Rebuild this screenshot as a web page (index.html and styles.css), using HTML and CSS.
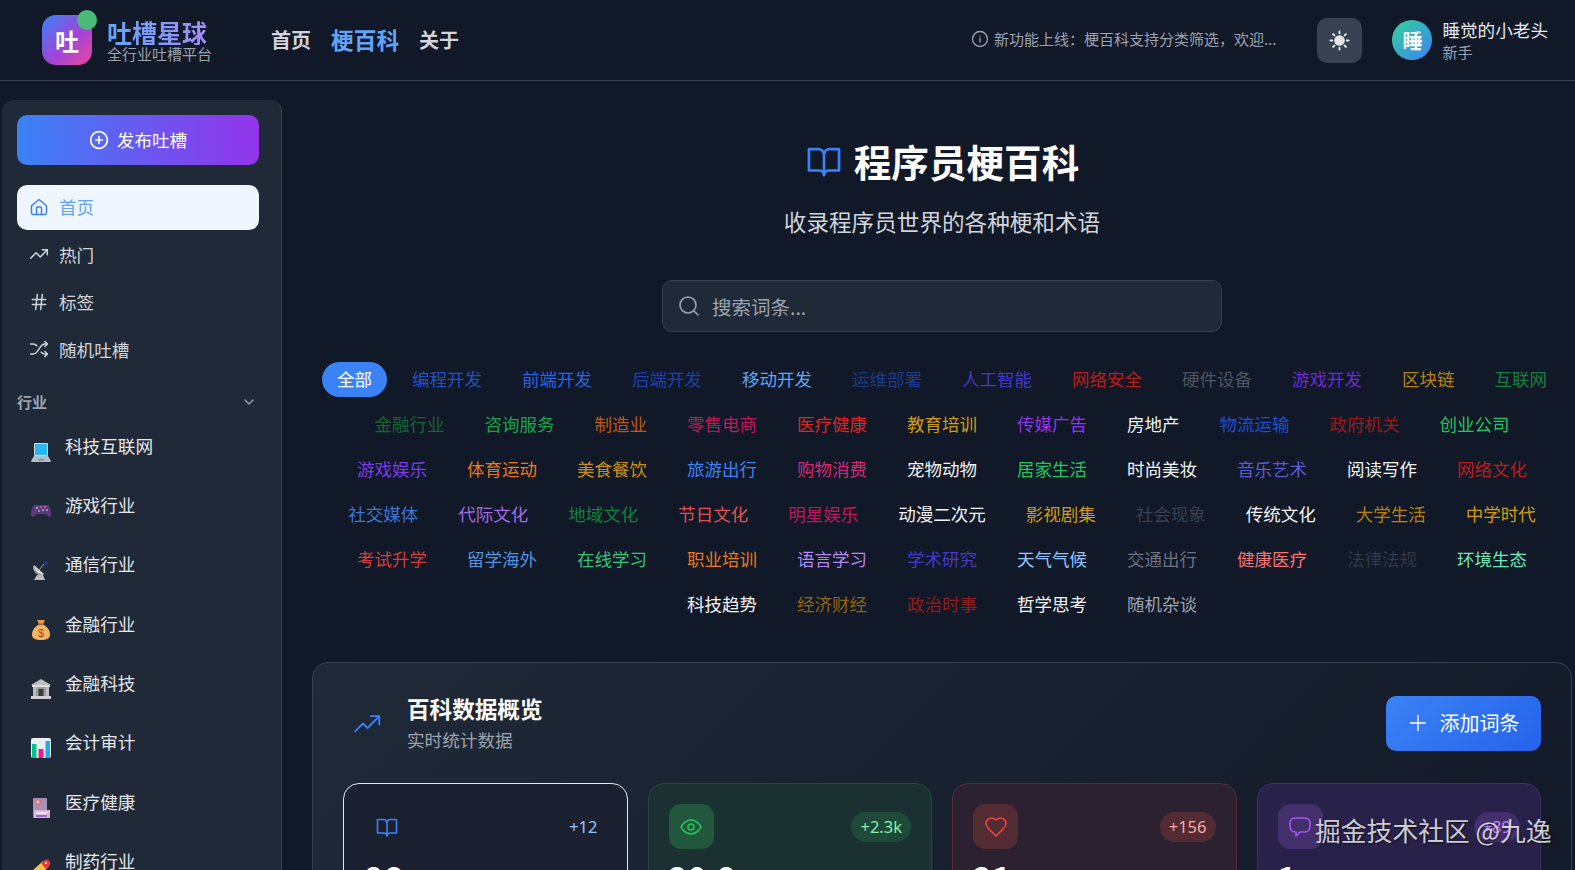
FILE: index.html
```html
<!DOCTYPE html>
<html lang="zh-CN">
<head>
<meta charset="utf-8">
<title>程序员梗百科</title>
<link rel="stylesheet" href="styles.css">
</head>
<body>
<header class="topbar">
  <div class="brand">
    <div class="logo">吐<span class="logo-dot"></span></div>
    <div class="brand-text">
      <div class="brand-name">吐槽星球</div>
      <div class="brand-sub">全行业吐槽平台</div>
    </div>
  </div>
  <nav class="topnav">
    <a class="topnav-link">首页</a>
    <a class="topnav-link is-active">梗百科</a>
    <a class="topnav-link">关于</a>
  </nav>
  <div class="notice">
    <svg class="notice-icon" viewBox="0 0 24 24"><circle cx="12" cy="12" r="10"/><path d="M12 16v-5M12 8h.01"/></svg>
    <span>新功能上线：梗百科支持分类筛选，欢迎...</span>
  </div>
  <button class="theme-btn" type="button">
    <svg viewBox="0 0 24 24"><circle cx="12" cy="12" r="4.5" class="sun-core"/><path d="M12 2.500v2M12 19.500v2M2.500 12h2M19.500 12h2M5.300 5.300l1.400 1.400M17.300 17.300l1.400 1.400M5.300 18.700l1.400-1.400M17.300 6.700l1.400-1.400"/></svg>
  </button>
  <div class="user">
    <div class="avatar">睡</div>
    <div class="user-text">
      <div class="user-name">睡觉的小老头</div>
      <div class="user-level">新手</div>
    </div>
  </div>
</header>

<div class="shell">
  <aside class="sidebar">
    <button class="publish" type="button">
      <svg viewBox="0 0 24 24"><circle cx="12" cy="12" r="10"/><path d="M12 8v8M8 12h8"/></svg>
      发布吐槽
    </button>
    <ul class="menu">
      <li class="menu-item is-current">
        <svg viewBox="0 0 24 24"><path d="M3 10.500 12 3l9 7.500V19a2 2 0 0 1-2 2H5a2 2 0 0 1-2-2z"/><path d="M9 21v-8a1 1 0 0 1 1-1h4a1 1 0 0 1 1 1v8"/></svg>
        首页
      </li>
      <li class="menu-item">
        <svg viewBox="0 0 24 24"><path d="M2 17l6.500-6.500 5 5L22 7"/><path d="M16 7h6v6"/></svg>
        热门
      </li>
      <li class="menu-item">
        <svg viewBox="0 0 24 24"><path d="M4 9h16M4 15h16M10 3 8 21M16 3l-2 18"/></svg>
        标签
      </li>
      <li class="menu-item">
        <svg viewBox="0 0 24 24"><path d="M2 18h3c2 0 3.500-1 4.600-2.600l4.800-6.800C15.500 7 17 6 19 6h3"/><path d="M19 3l3 3-3 3M19 15l3 3-3 3"/><path d="M2 6h3c1.800 0 3.200.8 4.300 2.200M14.700 15.800C15.800 17.200 17.200 18 19 18h3"/></svg>
        随机吐槽
      </li>
    </ul>
    <div class="section-head">
      <span>行业</span>
      <svg viewBox="0 0 24 24"><path d="m6 9 6 6 6-6"/></svg>
    </div>
    <ul class="industries">
      <li class="industry">
        <svg class="emoji" viewBox="0 0 20 20"><rect x="3" y="1" width="14" height="13" rx="1" fill="#cfd8dc"/><rect x="4" y="2" width="12" height="11" fill="#29b6f6"/><path d="M3 14h14l3 5a1 1 0 0 1-1 1H1a1 1 0 0 1-1-1z" fill="#b0bec5"/><rect x="7" y="17" width="6" height="1.500" fill="#78909c"/></svg>
        <span>科技互联网</span>
      </li>
      <li class="industry">
        <svg class="emoji" viewBox="0 0 20 20"><path d="M4 4h12c2 0 3 2 4 8 .4 3-.6 4-1.600 4-1.400 0-3-3-4.400-3H6c-1.400 0-3 3-4.400 3C.6 16-.4 15 0 12 1 6 2 4 4 4z" fill="#5c3a7d"/><circle cx="6" cy="7" r="1" fill="#c9b5e0"/><circle cx="10" cy="6" r=".8" fill="#c9b5e0"/><circle cx="14" cy="6" r="1" fill="#e57373"/><circle cx="12" cy="9" r="1" fill="#ba9fd8"/><circle cx="16" cy="9" r="1" fill="#ba9fd8"/><circle cx="8" cy="10" r=".9" fill="#ba9fd8"/></svg>
        <span>游戏行业</span>
      </li>
      <li class="industry">
        <svg class="emoji" viewBox="0 0 20 20"><path d="M3 5c1 5 4 8 10 9l-1.500 1.500c-5 .5-10-4-9.500-9z" fill="#9e9e9e"/><path d="M3 5l10 9c-4 1.500-10-3-10-9z" fill="#cfd8dc"/><path d="M8 10l5-6" stroke="#9e9e9e" stroke-width="1"/><path d="M13 4c0-2 2-3 3-4l1 6z" fill="#283593"/><path d="M6 15h6l2 5H3z" fill="#bdbdbd"/></svg>
        <span>通信行业</span>
      </li>
      <li class="industry">
        <svg class="emoji" viewBox="0 0 20 20"><path d="M7 5c-5 3-6 7-6 10 0 3 3 5 9 5s9-2 9-5c0-3-1-7-6-10z" fill="#f4b266"/><path d="M6 0h8l-2 4H8z" fill="#e89a46"/><rect x="7" y="3.500" width="6" height="1.600" fill="#8d6e3f"/><text x="10" y="16.500" class="emoji-dollar">$</text></svg>
        <span>金融行业</span>
      </li>
      <li class="industry">
        <svg class="emoji" viewBox="0 0 20 20"><path d="M10 0 20 6H0z" fill="#bdbdbd"/><rect x="1" y="6" width="18" height="2" fill="#e0e0e0"/><rect x="2" y="8" width="3" height="9" fill="#bdbdbd"/><rect x="15" y="8" width="3" height="9" fill="#bdbdbd"/><rect x="5" y="8" width="10" height="9" fill="#9e9e9e"/><rect x="7.500" y="10" width="5" height="7" fill="#37393d"/><rect x="0" y="17" width="20" height="3" fill="#cfd2d6"/></svg>
        <span>金融科技</span>
      </li>
      <li class="industry">
        <svg class="emoji" viewBox="0 0 20 20"><rect width="20" height="20" rx="2" fill="#eceff1"/><rect x="1" y="6" width="4.500" height="14" fill="#00c48c"/><rect x="7.500" y="11" width="5" height="9" fill="#e91e8c"/><rect x="14.500" y="3" width="4.500" height="17" fill="#29a9e6"/></svg>
        <span>会计审计</span>
      </li>
      <li class="industry">
        <svg class="emoji" viewBox="0 0 20 20"><rect x="2" y="0" width="14" height="20" rx="1" fill="#a892b6"/><circle cx="7" cy="4" r="3" fill="#e57373"/><path d="M6 4h2M7 3v2" stroke="#fff" stroke-width=".8"/><rect x="3" y="12" width="16" height="8" fill="#d9b8e0"/><rect x="5" y="14" width="11" height="2" fill="#f3e5f5"/><rect x="5" y="17" width="11" height="2" fill="#a366c0"/></svg>
        <span>医疗健康</span>
      </li>
      <li class="industry">
        <svg class="emoji" viewBox="0 0 20 20"><path d="M1 14 12 4l6 5L8 20H3z" fill="#f9c53b"/><path d="M10 6l4-3c2-1 4 0 5 2s0 3-1 4l-3 3z" fill="#e53935"/><circle cx="15" cy="6" r="1" fill="#fff"/></svg>
        <span>制药行业</span>
      </li>
    </ul>
  </aside>

  <main class="content">
    <section class="hero">
      <h1 class="hero-title">
        <svg viewBox="0 0 24 24"><path d="M12 6.500v14.500"/><path d="M2.500 4.500h6a3.500 3.500 0 0 1 3.500 3 3.500 3.500 0 0 1 3.500-3h6V18h-6.500c-1.400 0-2.500.9-3 2.500-.5-1.600-1.600-2.500-3-2.500H2.500z"/></svg>
        程序员梗百科
      </h1>
      <p class="hero-sub">收录程序员世界的各种梗和术语</p>
      <label class="search">
        <svg viewBox="0 0 24 24"><circle cx="11" cy="11" r="8"/><path d="m21 21-4.300-4.300"/></svg>
        <span>搜索词条...</span>
      </label>
    </section>

    <div class="tags">
      <span class="tag tag-all">全部</span>
      <span class="tag c-blue7">编程开发</span>
      <span class="tag c-blue6">前端开发</span>
      <span class="tag c-blue8">后端开发</span>
      <span class="tag c-blue4">移动开发</span>
      <span class="tag c-blue9">运维部署</span>
      <span class="tag c-indigo7">人工智能</span>
      <span class="tag c-red7">网络安全</span>
      <span class="tag c-gray6">硬件设备</span>
      <span class="tag c-purple7">游戏开发</span>
      <span class="tag c-yellow7">区块链</span>
      <span class="tag c-green7">互联网</span>
      <span class="tag c-green8">金融行业</span>
      <span class="tag c-green6">咨询服务</span>
      <span class="tag c-orange7">制造业</span>
      <span class="tag c-pink7">零售电商</span>
      <span class="tag c-red6">医疗健康</span>
      <span class="tag c-yellow6">教育培训</span>
      <span class="tag c-purple5">传媒广告</span>
      <span class="tag c-white">房地产</span>
      <span class="tag c-blue7b">物流运输</span>
      <span class="tag c-red8">政府机关</span>
      <span class="tag c-green5">创业公司</span>
      <span class="tag c-purple6">游戏娱乐</span>
      <span class="tag c-orange6">体育运动</span>
      <span class="tag c-yellow7b">美食餐饮</span>
      <span class="tag c-blue5">旅游出行</span>
      <span class="tag c-pink6">购物消费</span>
      <span class="tag c-white">宠物动物</span>
      <span class="tag c-green5">居家生活</span>
      <span class="tag c-white">时尚美妆</span>
      <span class="tag c-indigo5">音乐艺术</span>
      <span class="tag c-white">阅读写作</span>
      <span class="tag c-red7">网络文化</span>
      <span class="tag c-blue5b">社交媒体</span>
      <span class="tag c-purple4">代际文化</span>
      <span class="tag c-green7">地域文化</span>
      <span class="tag c-red5b">节日文化</span>
      <span class="tag c-pink7">明星娱乐</span>
      <span class="tag c-white">动漫二次元</span>
      <span class="tag c-yellow6">影视剧集</span>
      <span class="tag c-gray7">社会现象</span>
      <span class="tag c-white">传统文化</span>
      <span class="tag c-yellow7">大学生活</span>
      <span class="tag c-yellow6">中学时代</span>
      <span class="tag c-red5">考试升学</span>
      <span class="tag c-blue4b">留学海外</span>
      <span class="tag c-green4">在线学习</span>
      <span class="tag c-orange6">职业培训</span>
      <span class="tag c-purple4b">语言学习</span>
      <span class="tag c-indigo7">学术研究</span>
      <span class="tag c-blue3">天气气候</span>
      <span class="tag c-gray5">交通出行</span>
      <span class="tag c-red4">健康医疗</span>
      <span class="tag c-gray8">法律法规</span>
      <span class="tag c-green3">环境生态</span>
      <span class="tag c-white">科技趋势</span>
      <span class="tag c-yellow8">经济财经</span>
      <span class="tag c-red8b">政治时事</span>
      <span class="tag c-white">哲学思考</span>
      <span class="tag c-gray4">随机杂谈</span>
    </div>

    <section class="panel">
      <div class="panel-head">
        <svg class="panel-trend" viewBox="0 0 24 24"><path d="M1 19l7-7 4 4L22 6"/><path d="M15 5.500h7.500V13"/></svg>
        <div class="panel-titles">
          <h2 class="panel-title">百科数据概览</h2>
          <p class="panel-sub">实时统计数据</p>
        </div>
        <button class="add-btn" type="button">
          <svg viewBox="0 0 24 24"><path d="M12 3v18M3 12h18"/></svg>
          添加词条
        </button>
      </div>
      <div class="stats">
        <article class="stat stat-blue">
          <div class="stat-top">
            <span class="stat-icon"><svg viewBox="0 0 24 24"><path d="M12 6.500v14.500"/><path d="M2.500 4.500h6a3.500 3.500 0 0 1 3.500 3 3.500 3.500 0 0 1 3.500-3h6V18h-6.500c-1.400 0-2.500.9-3 2.500-.5-1.600-1.600-2.500-3-2.500H2.500z"/></svg></span>
            <span class="stat-badge">+12</span>
          </div>
          <div class="stat-num">86</div>
        </article>
        <article class="stat stat-green">
          <div class="stat-top">
            <span class="stat-icon"><svg viewBox="0 0 24 24"><path d="M2 12s3.500-7 10-7 10 7 10 7-3.500 7-10 7-10-7-10-7z"/><circle cx="12" cy="12" r="3"/></svg></span>
            <span class="stat-badge">+2.3k</span>
          </div>
          <div class="stat-num">20.8</div>
        </article>
        <article class="stat stat-red">
          <div class="stat-top">
            <span class="stat-icon"><svg viewBox="0 0 24 24"><path d="M19 14c1.500-1.500 3-3.200 3-5.500A5.500 5.500 0 0 0 16.500 3c-1.800 0-3 .5-4.500 2-1.500-1.500-2.700-2-4.500-2A5.500 5.500 0 0 0 2 8.500c0 2.300 1.500 4 3 5.500l7 7z"/></svg></span>
            <span class="stat-badge">+156</span>
          </div>
          <div class="stat-num">21</div>
        </article>
        <article class="stat stat-purple">
          <div class="stat-top">
            <span class="stat-icon"><svg viewBox="0 0 24 24"><path d="M7 3h10a5 5 0 0 1 5 5v4a5 5 0 0 1-5 5h-5l-4 4v-4H7a5 5 0 0 1-5-5V8a5 5 0 0 1 5-5z"/></svg></span>
            <span class="stat-badge">+89</span>
          </div>
          <div class="stat-num">1</div>
        </article>
      </div>
    </section>
  </main>
</div>
<div class="watermark">掘金技术社区 @九逸</div>
</body>
</html>
```
FILE: styles.css
```css
* { box-sizing: border-box; }
html, body { margin: 0; height: 100%; }
body {
  height: 870px;
  overflow: hidden;
  background: #111827;
  color: #fff;
  font-family: "Noto Sans CJK SC", "Noto Sans", sans-serif;
  position: relative;
}
svg { fill: none; stroke: currentColor; stroke-width: 2; stroke-linecap: round; stroke-linejoin: round; display: block; flex: none; }

.topbar {
  height: 81px;
  border-bottom: 1px solid #374151;
  padding: 0 27px 0 42px;
  display: flex;
  align-items: center;
}
.brand { display: flex; align-items: center; gap: 15px; }
.logo {
  width: 50px; height: 50px; border-radius: 14px;
  background: linear-gradient(135deg, #3b82f6, #a044d8 55%, #ec4899);
  display: flex; align-items: center; justify-content: center;
  font-size: 24px; font-weight: 700; position: relative;
}
.logo-dot {
  position: absolute; top: -5px; right: -5px;
  width: 20px; height: 20px; border-radius: 50%;
  background: #48bb78;
}
.brand-name {
  font-size: 25px; font-weight: 700; line-height: 26px;
  background: linear-gradient(90deg, #60a5fa, #a78bfa);
  -webkit-background-clip: text; background-clip: text; color: transparent;
}
.brand-sub { margin-top: 1px; font-size: 15px; line-height: 15px; color: #9ca3af; }

.topnav { display: flex; align-items: center; gap: 20px; margin-left: 59px; padding-bottom: 2px; }
.topnav-link { font-size: 20px; font-weight: 700; color: #d1d5db; }
.topnav-link.is-active { font-size: 22.700px; color: #60a5fa; }

.notice { margin-left: auto; display: flex; align-items: center; gap: 5px; padding-bottom: 3px; font-size: 15px; color: #9ca3af; }
.notice-icon { width: 18px; height: 18px; stroke-width: 1.800; }
.theme-btn {
  margin-left: 41px; width: 45px; height: 45px; border: 0; border-radius: 10px;
  background: #374151; color: #e5e7eb; padding: 11px; display: flex;
}
.theme-btn svg { width: 23px; height: 23px; }
.sun-core { fill: currentColor; }
.user { margin-left: 30px; display: flex; align-items: center; gap: 10px; }
.avatar {
  width: 40px; height: 40px; border-radius: 50%;
  background: linear-gradient(135deg, #34d399, #3b82f6);
  display: flex; align-items: center; justify-content: center;
  font-size: 20px; font-weight: 700;
}
.user-name { font-size: 17.600px; line-height: 24px; color: #e5e7eb; }
.user-level { font-size: 15px; line-height: 20px; color: #9ca3af; }

.shell { display: flex; padding: 19px 3px 0 2px; gap: 30px; align-items: flex-start; }

.sidebar {
  width: 280px; flex: none;
  height: 800px;
  overflow: hidden;
  background: #1f2937;
  border-radius: 12px 12px 0 0;
  border-right: 1px solid #374151;
  padding: 15px 22px 0 15px;
}
.publish {
  width: 100%; height: 50px; border: 0; border-radius: 10px; padding: 0 0 2px;
  background: linear-gradient(90deg, #3b82f6, #9333ea);
  color: #fff; font: inherit; font-size: 17.600px;
  display: flex; align-items: center; justify-content: center; gap: 8px;
}
.publish svg { width: 20px; height: 20px; margin-top: 2px; }
.menu, .industries { list-style: none; margin: 0; padding: 0; }
.menu { margin-top: 20px; display: flex; flex-direction: column; gap: 2.500px; }
.menu-item {
  height: 45px; border-radius: 10px; padding: 0 12px 2px;
  display: flex; align-items: center; gap: 10px;
  font-size: 17.600px; color: #d1d5db;
}
.menu-item svg { width: 20px; height: 20px; color: #d1d5db; stroke-width: 1.800; }
.menu-item.is-current { background: #eff6ff; color: #60a5fa; }
.menu-item.is-current svg { color: #3b82f6; }

.section-head {
  margin-top: 17px; height: 24px; display: flex; align-items: center; justify-content: space-between;
  padding-right: 2px; font-size: 15px; font-weight: 600; color: #9ca3af;
}
.section-head svg { width: 16px; height: 16px; }
.industries { margin-top: 19px; }
.industry {
  height: 59.400px; padding-left: 14px; display: flex; align-items: flex-start; gap: 14px;
  font-size: 17.600px; line-height: 26px; color: #e5e7eb;
}
.emoji { width: 20px; height: 20px; margin-top: 9px; stroke: none; }
.emoji-dollar { font-size: 11px; fill: #8d5a1f; text-anchor: middle; font-family: "Liberation Sans", sans-serif; }

.content { flex: 1; min-width: 0; padding-top: 38px; }
.hero { display: flex; flex-direction: column; align-items: center; }
.hero-title {
  margin: 0; font-size: 37.600px; font-weight: 700; line-height: 46px;
  display: flex; align-items: center; gap: 11px;
}
.hero-title svg { width: 38px; height: 38px; color: #3b82f6; stroke-width: 1.700; }
.hero-sub { margin: 22px 0 0; font-size: 22.600px; line-height: 32px; color: #d1d5db; }
.search {
  margin-top: 42px; width: 560px; height: 52px;
  background: #1f2937; border: 1px solid #374151; border-radius: 10px;
  display: flex; align-items: center; gap: 11px; padding-left: 14px;
  font-size: 19.500px; color: #9ca3af;
}
.search svg { width: 24px; height: 24px; stroke-width: 1.600; }

.tags {
  margin-top: 30px;
  display: flex; flex-wrap: wrap; justify-content: center; gap: 10px;
}
.tag { padding: 0 15px 2px; height: 35px; line-height: 33px; font-size: 17.500px; white-space: nowrap; border-radius: 18px; }
.tag-all { background: #3b82f6; color: #fff; }
.c-white { color: #f3f4f6; }
.c-blue3 { color: #93c5fd; } .c-blue4 { color: #60a5fa; } .c-blue4b { color: #4f94e0; } .c-blue5 { color: #3b82f6; } .c-blue5b { color: #3e75d4; }
.c-blue6 { color: #2563eb; } .c-blue7 { color: #2050c8; } .c-blue7b { color: #1d4ed8; } .c-blue8 { color: #1e40af; } .c-blue9 { color: #1e3a8a; }
.c-indigo5 { color: #5b5bd6; } .c-indigo7 { color: #4338ca; }
.c-red4 { color: #f87171; } .c-red5 { color: #d63c3c; } .c-red5b { color: #e05252; } .c-red6 { color: #dc2626; } .c-red7 { color: #b91c1c; } .c-red8 { color: #991b1b; } .c-red8b { color: #8f1d1d; }
.c-gray4 { color: #9ca3af; } .c-gray5 { color: #6b7280; } .c-gray6 { color: #4b5563; } .c-gray7 { color: #374151; } .c-gray8 { color: #2f3947; }
.c-purple4 { color: #a06be8; } .c-purple4b { color: #b685f5; } .c-purple5 { color: #9333ea; } .c-purple6 { color: #7c3aed; } .c-purple7 { color: #6d28d9; }
.c-yellow6 { color: #d19c12; } .c-yellow7 { color: #b58210; } .c-yellow7b { color: #c89212; } .c-yellow8 { color: #92640e; }
.c-green3 { color: #6ee7b7; } .c-green4 { color: #34c574; } .c-green5 { color: #22c55e; } .c-green6 { color: #16a34a; } .c-green7 { color: #15803d; } .c-green8 { color: #166534; }
.c-orange6 { color: #ea7a1a; } .c-orange7 { color: #c2590c; }
.c-pink6 { color: #db2777; } .c-pink7 { color: #be185d; }

.panel {
  margin-top: 40px; height: 400px; padding: 30px 30px 30px;
  border: 1px solid #374151; border-radius: 16px;
  background: linear-gradient(135deg, #1f2937, #111827);
}
.panel-head { display: flex; align-items: center; }
.panel-trend { width: 27px; height: 27px; margin-left: 11px; color: #3b82f6; stroke-width: 1.600; }
.panel-titles { margin-left: 26px; padding-top: 1px; }
.panel-title { margin: 0; font-size: 22.600px; line-height: 30px; font-weight: 700; }
.panel-sub { margin: 0; padding-top: 2px; font-size: 17.600px; line-height: 27px; color: #9ca3af; }
.add-btn {
  margin-left: auto; width: 155px; height: 55px; border: 0; border-radius: 10px; padding: 0 0 2px;
  background: linear-gradient(135deg, #3b82f6, #2563eb);
  color: #fff; font: inherit; font-size: 20px;
  display: flex; align-items: center; justify-content: center; gap: 12px;
}
.add-btn svg { width: 20px; height: 20px; stroke-width: 1.600; margin-top: 2px; }
.stats { margin-top: 30px; display: grid; grid-template-columns: repeat(4, 1fr); gap: 20px; }
.stat { height: 180px; padding: 20px; border: 1px solid; border-radius: 16px; }
.stat-top { display: flex; justify-content: space-between; align-items: center; }
.stat-icon { width: 45px; height: 45px; border-radius: 12px; display: flex; align-items: center; justify-content: center; }
.stat-icon svg { width: 24px; height: 24px; stroke-width: 1.600; }
.stat-badge { height: 30px; line-height: 30px; padding: 0 9px; border-radius: 15px; font-size: 16.500px; font-family: "Noto Sans", sans-serif; }
.stat-num { margin-top: 8px; font-size: 32px; line-height: 40px; font-weight: 700; }
.stat-blue { background: #1a2030; border-color: #e5e7eb; }
.stat-blue .stat-icon svg { color: #3b82f6; }
.stat-blue .stat-badge { color: #93c5fd; }
.stat-green { background: #1a3031; border-color: #234a40; }
.stat-green .stat-icon { background: #22563d; color: #22c55e; }
.stat-green .stat-badge { background: #1f4a39; color: #86efac; }
.stat-red { background: #2c2130; border-color: #5c2a35; }
.stat-red .stat-icon { background: #532b33; color: #ef4444; }
.stat-red .stat-badge { background: #532b33; color: #fca5a5; }
.stat-purple { background: #28214a; border-color: #3b3266; }
.stat-purple .stat-icon { background: #432f6c; color: #a855f7; }
.stat-purple .stat-badge { background: #432f6c; color: #c084fc; }

.watermark {
  position: absolute; left: 1315px; top: 813px;
  font-size: 25.800px; line-height: 34px; color: rgba(255,255,255,.78);
  text-shadow: 1px 1px 2px rgba(0,0,0,.6);
  white-space: nowrap;
}
```
